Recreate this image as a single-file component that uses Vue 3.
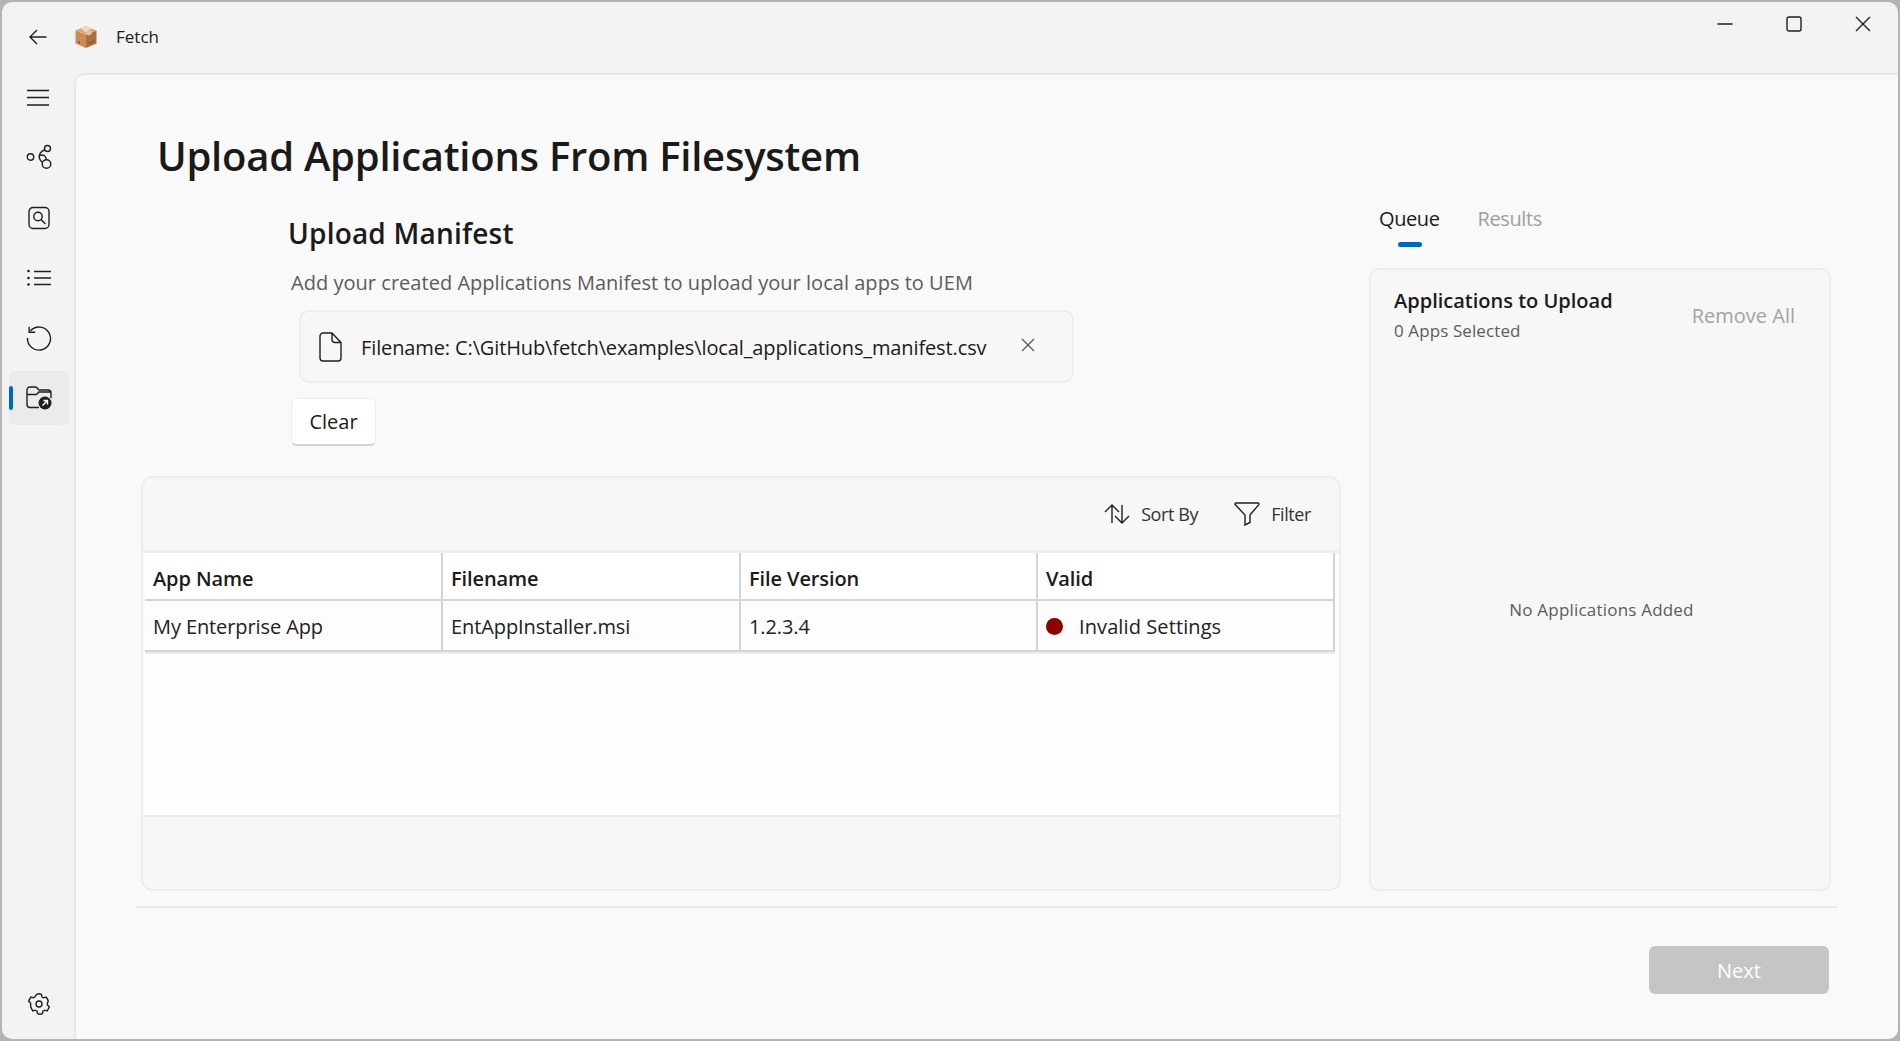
<script setup>
const columns = ['App Name', 'Filename', 'File Version', 'Valid']
const rows = [
  { name: 'My Enterprise App', file: 'EntAppInstaller.msi', version: '1.2.3.4', status: 'Invalid Settings' }
]
</script>

<template>
  <div class="window">
    <header class="titlebar">
      <svg class="back" width="18" height="16" viewBox="0 0 18 16">
        <path d="M17.500 8H1M8 1 1 8l7 7" />
      </svg>
      <svg class="pkg" width="24" height="24" viewBox="0 0 24 24">
        <path d="M12 9.500 1.500 5.500v13L12 23z" fill="#c98d54" />
        <path d="M12 9.500 22.500 5.500v13L12 23z" fill="#a9713e" />
        <path d="M1.500 5.500 12 1l10.500 4.500L12 9.500z" fill="#dba76f" />
        <path d="M6.500 3.300 12 1l5.500 2.300L12 7.500z" fill="#eed9be" />
        <path d="M12 7.500l5.500-2.200v4L14.500 10.500 12 9.500z" fill="#dcc4a4" />
        <path d="M15 17.500l1.500-.6v1.500l-1.500.6zM18 16.300l2-.8V17l-2 .8zM4 16l2 .8v1.400l-2-.8z" fill="#7a4f2a" />
      </svg>
      <span class="app-name">Fetch</span>
      <div class="controls">
        <svg width="16" height="16" viewBox="0 0 16 16"><path d="M0.500 8h15" /></svg>
        <svg width="16" height="16" viewBox="0 0 16 16"><rect x="1" y="1" width="14" height="14" rx="2" /></svg>
        <svg width="16" height="16" viewBox="0 0 16 16"><path d="M1 1l14 14M15 1 1 15" /></svg>
      </div>
    </header>

    <div class="body">
      <nav class="sidebar">
        <div class="nav-item">
          <svg width="24" height="24" viewBox="0 0 24 24"><path d="M0 5.500h22M0 12.500h22M0 20h22" /></svg>
        </div>
        <div class="nav-item">
          <svg width="26" height="26" viewBox="0 0 26 26">
            <circle cx="4.500" cy="13" r="3.200" />
            <circle cx="21.500" cy="4.500" r="3" />
            <circle cx="20.500" cy="20" r="4.300" />
            <path d="M19 5.800C14.500 7 12.300 11 13.500 14.500 14.200 16.500 15.300 17.800 16.500 18.500M14 11.500c2.500-1 5.500-.5 6.500 4.200" />
          </svg>
        </div>
        <div class="nav-item">
          <svg width="24" height="24" viewBox="0 0 24 24">
            <rect x="2" y="1.500" width="20" height="21" rx="4" />
            <circle cx="11" cy="10.500" r="4.200" />
            <path d="M14 13.500l4.500 4.500" />
          </svg>
        </div>
        <div class="nav-item">
          <svg width="26" height="26" viewBox="0 0 26 26">
            <path d="M8 6.500h17M8 13h17M8 19.500h17" />
            <circle class="solid" cx="2.500" cy="6" r="1.300" />
            <circle class="solid" cx="2.500" cy="13" r="1.300" />
            <circle class="solid" cx="2.500" cy="19.500" r="1.300" />
          </svg>
        </div>
        <div class="nav-item">
          <svg width="26" height="26" viewBox="0 0 26 26">
            <path d="M4.500 5.800A11.500 11.500 0 1 1 1.500 13M3.200 1.700v5.500h6" />
          </svg>
        </div>
        <div class="nav-item selected">
          <svg width="26" height="24" viewBox="0 0 26 24">
            <path d="M13 21.500H4a3 3 0 0 1-3-3V4a3 3 0 0 1 3-3h5c1 0 1.700.4 2.400 1.200L13 4h9a3 3 0 0 1 3 3v5M1 8.500h9.500L13 6h12" />
            <circle class="solid" cx="19" cy="17" r="6.500" />
            <path class="light" d="M16.500 19.500l5-5M17.500 14.500h4v4" />
          </svg>
        </div>
        <div class="nav-item settings">
          <svg width="24" height="24" viewBox="0 0 24 24">
            <circle cx="12" cy="12" r="3" />
            <path d="M9.600 2.300c1.500-.6 3.300-.6 4.800 0l.5 2.500 1.700 1 2.400-.8c1 1.200 1.900 2.700 2.300 4.200L20.400 11v2l1.900 1.800c-.4 1.500-1.300 3-2.300 4.200l-2.400-.8-1.700 1-.5 2.500c-1.500.6-3.300.6-4.800 0l-.5-2.500-1.700-1-2.400.8c-1-1.200-1.900-2.700-2.300-4.200L3.600 13v-2L1.700 9.200C2.100 7.700 3 6.200 4 5l2.400.8 1.700-1z" />
          </svg>
        </div>
      </nav>

      <main class="main">
        <h1 class="title">Upload Applications From Filesystem</h1>

        <div class="columns">
          <section class="left">
            <h2 class="heading">Upload Manifest</h2>
            <p class="desc">Add your created Applications Manifest to upload your local apps to UEM</p>
            <div class="file-card">
              <svg width="24" height="30" viewBox="0 0 24 30">
                <path d="M5 1h9l9 9.500V26a3 3 0 0 1-3 3H5a3 3 0 0 1-3-3V4a3 3 0 0 1 3-3zM14 1v6.500a3 3 0 0 0 3 3h6" />
              </svg>
              <span class="file-name">Filename: C:\GitHub\fetch\examples\local_applications_manifest.csv</span>
              <svg class="file-x" width="14" height="14" viewBox="0 0 14 14"><path d="M1 1l12 12M13 1 1 13" /></svg>
            </div>
            <button class="clear">Clear</button>

            <div class="table-card">
              <div class="toolbar">
                <div class="tool">
                  <svg width="26" height="20" viewBox="0 0 26 20">
                    <path d="M8 19V1M1 8l7-7 7 7M18 1v18M11 12l7 7 7-7" />
                  </svg>
                  <span>Sort By</span>
                </div>
                <div class="tool">
                  <svg width="26" height="24" viewBox="0 0 26 24">
                    <path d="M2 1h22a1 1 0 0 1 .8 1.600L16 13v7.500L11 23V13L1.200 2.600A1 1 0 0 1 2 1z" />
                  </svg>
                  <span>Filter</span>
                </div>
              </div>
              <div class="grid">
                <div class="grid-row head">
                  <div v-for="c in columns" :key="c" class="cell">{{ c }}</div>
                </div>
                <div v-for="r in rows" :key="r.name" class="grid-row data">
                  <div class="cell">{{ r.name }}</div>
                  <div class="cell">{{ r.file }}</div>
                  <div class="cell">{{ r.version }}</div>
                  <div class="cell"><i class="dot"></i>{{ r.status }}</div>
                </div>
              </div>
              <div class="table-foot"></div>
            </div>
          </section>

          <section class="right">
            <div class="tabs">
              <div class="tab active">Queue<i class="tab-bar"></i></div>
              <div class="tab">Results</div>
            </div>
            <div class="queue">
              <div class="queue-head">
                <div>
                  <div class="queue-title">Applications to Upload</div>
                  <div class="queue-sub">0 Apps Selected</div>
                </div>
                <span class="remove">Remove All</span>
              </div>
              <div class="empty">No Applications Added</div>
            </div>
          </section>
        </div>

        <div class="divider"></div>
        <div class="actions">
          <button class="next">Next</button>
        </div>
      </main>
    </div>
  </div>
</template>

<style>
html, body {
  margin: 0;
  background: #b4b4b4;
}
</style>

<style scoped>
.window {
  box-sizing: border-box;
  width: 1900px;
  height: 1041px;
  border: 2px solid #b4b4b4;
  border-radius: 12px;
  background: #f3f3f3;
  overflow: hidden;
  display: flex;
  flex-direction: column;
  font-family: "Open Sans", "Noto Sans", sans-serif;
  color: #1b1b1b;
}

svg {
  fill: none;
  stroke: #1f1f1f;
  stroke-width: 1.4;
  flex: none;
}

.titlebar {
  height: 68px;
  flex: none;
  display: flex;
  align-items: flex-start;
}

.back {
  margin: 27px 0 0 27px;
}

.pkg {
  stroke: none;
  margin: 23px 0 0 27px;
}

.app-name {
  margin: 24px 0 0 18px;
  font-size: 17px;
  line-height: 22px;
}

.controls {
  margin-left: auto;
  margin-top: 14px;
  margin-right: 27px;
  display: flex;
  gap: 53px;
}

.body {
  flex: 1;
  min-height: 0;
  display: flex;
}

.sidebar {
  width: 72px;
  flex: none;
  display: flex;
  flex-direction: column;
  align-items: flex-start;
  gap: 6.300px;
  padding-left: 7px;
  box-sizing: border-box;
}

.nav-item {
  position: relative;
  width: 60px;
  height: 54px;
  border-radius: 6px;
  flex: none;
  display: flex;
  align-items: center;
  justify-content: center;
}

.nav-item .solid {
  fill: #1f1f1f;
  stroke: none;
}

.nav-item .light {
  stroke: #fff;
  stroke-width: 1.4;
}

.nav-item.selected {
  background: #ebebeb;
}

.nav-item.selected::before {
  content: "";
  position: absolute;
  left: 0;
  top: 15px;
  width: 4px;
  height: 24px;
  border-radius: 2px;
  background: #0067c0;
}

.settings {
  margin-top: auto;
  margin-bottom: 8px;
}

.main {
  flex: 1;
  min-width: 0;
  margin-top: 3px;
  border-left: 2px solid #e8e8e8;
  border-top: 2px solid #e8e8e8;
  border-top-left-radius: 10px;
  background: #f9f9f9;
  display: flex;
  flex-direction: column;
}

.title {
  margin: 56px 0 0 81px;
  font-size: 40px;
  line-height: 50px;
  font-weight: 600;
  letter-spacing: -0.25px;
  color: #1a1a1a;
}

.columns {
  margin: 15px 0 0 65px;
  display: flex;
  gap: 28px;
  height: 695px;
}

.left {
  width: 1200px;
  display: flex;
  flex-direction: column;
  align-items: flex-start;
  padding-top: 19px;
  box-sizing: border-box;
}

.heading {
  margin: 0 0 0 147px;
  font-size: 28px;
  line-height: 36px;
  font-weight: 600;
  letter-spacing: 0.2px;
}

.desc {
  margin: 20px 0 0 150px;
  font-size: 20px;
  line-height: 24px;
  letter-spacing: 0.03px;
  color: #5c5c5c;
}

.file-card {
  box-sizing: border-box;
  margin: 15px 0 0 158px;
  width: 775px;
  height: 73px;
  border: 2px solid #ededed;
  border-radius: 10px;
  background: #f7f7f7;
  display: flex;
  align-items: center;
  padding-left: 17px;
}

.file-name {
  margin-left: 19px;
  padding-top: 2px;
  font-size: 20px;
  letter-spacing: -0.12px;
}

.file-x {
  margin-left: auto;
  margin-right: 37px;
  margin-bottom: 3px;
  stroke: #555;
  stroke-width: 1.2;
}

.clear {
  box-sizing: border-box;
  margin: 15px 0 0 150px;
  width: 85px;
  height: 48px;
  border: 1px solid #ececec;
  border-bottom: 2px solid #d2d2d2;
  border-radius: 6px;
  background: #fff;
  font: inherit;
  font-size: 20px;
  color: #1b1b1b;
}

.table-card {
  box-sizing: border-box;
  margin-top: 30px;
  width: 100%;
  flex: 1;
  border: 2px solid #ededed;
  border-radius: 12px;
  background: #fdfdfd;
  overflow: hidden;
  display: flex;
  flex-direction: column;
}

.toolbar {
  height: 75px;
  flex: none;
  box-sizing: border-box;
  background: #f7f7f7;
  border-bottom: 3px solid #eeeeee;
  display: flex;
  justify-content: flex-end;
  align-items: center;
  gap: 36px;
  padding: 0 28px 1px 0;
  font-size: 18px;
  letter-spacing: -0.4px;
  color: #333;
}

.tool {
  display: flex;
  align-items: center;
  gap: 11px;
}

.grid {
  margin-left: 2px;
  width: 1188px;
  flex: none;
  border-right: 2px solid #d4d4d4;
  border-bottom: 2px solid #d4d4d4;
  box-shadow: 0 2px 0 #eeeeee;
}

.grid-row {
  display: grid;
  grid-template-columns: 298px 298px 297px 1fr;
}

.head {
  height: 46px;
  background: #fff;
  font-weight: 600;
  border-bottom: 2px solid #d4d4d4;
}

.head .cell {
  padding-top: 4px;
}

.data {
  height: 49px;
  background: #fdfdfd;
  color: #222;
}

.data .cell {
  padding-top: 1px;
}

.cell {
  box-sizing: border-box;
  display: flex;
  align-items: center;
  padding-left: 8px;
  font-size: 20px;
  letter-spacing: -0.1px;
  border-right: 2px solid #d4d4d4;
}

.cell:last-child {
  border-right: none;
}

.data .cell:last-child {
  letter-spacing: 0.1px;
}

.dot {
  width: 17px;
  height: 17px;
  border-radius: 50%;
  background: #8b0000;
  margin-right: 16px;
  flex: none;
}

.table-foot {
  margin-top: auto;
  height: 74px;
  flex: none;
  box-sizing: border-box;
  background: #f7f7f7;
  border-top: 2px solid #eaeaea;
}

.right {
  width: 462px;
  display: flex;
  flex-direction: column;
}

.tabs {
  height: 72px;
  flex: none;
  display: flex;
  gap: 38px;
  padding-left: 10px;
  padding-top: 1px;
  box-sizing: border-box;
  font-size: 20px;
  line-height: 44px;
  letter-spacing: -0.4px;
  color: #9e9e9e;
}

.tab {
  position: relative;
}

.tab.active {
  color: #1b1b1b;
}

.tab-bar {
  position: absolute;
  left: 19px;
  top: 45px;
  width: 24px;
  height: 5px;
  border-radius: 3px;
  background: #0067c0;
}

.queue {
  flex: 1;
  box-sizing: border-box;
  border: 2px solid #ededed;
  border-radius: 10px;
  background: #f7f7f7;
  display: flex;
  flex-direction: column;
  padding: 17px 34px 0 23px;
}

.queue-head {
  display: flex;
  align-items: center;
  justify-content: space-between;
}

.queue-title {
  font-size: 20px;
  line-height: 28px;
  font-weight: 600;
}

.queue-sub {
  margin-top: 4px;
  font-size: 17px;
  line-height: 24px;
  letter-spacing: 0.1px;
  color: #5c5c5c;
}

.remove {
  font-size: 20px;
  color: #a3a3a3;
}

.empty {
  margin-top: 255px;
  margin-left: 14px;
  text-align: center;
  font-size: 17px;
  line-height: 24px;
  letter-spacing: 0.2px;
  color: #5c5c5c;
}

.divider {
  margin: 15px 0 0 60px;
  width: 1702px;
  height: 2px;
  background: #ebebeb;
  flex: none;
}

.actions {
  margin: 38px 0 0 1573px;
}

.next {
  width: 180px;
  height: 48px;
  border: none;
  border-radius: 6px;
  background: #c5c5c5;
  color: #fff;
  font: inherit;
  font-size: 20px;
}
</style>
